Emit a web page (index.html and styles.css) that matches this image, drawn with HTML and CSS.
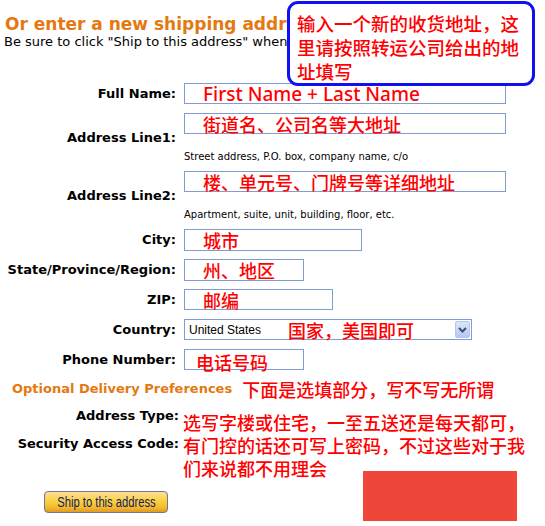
FILE: index.html
```html
<!doctype html>
<html lang="en">

<head>
  <meta charset="UTF-8">
  <title>Shipping Address</title>
  <link rel="stylesheet" href="styles.css">
</head>

<body>
  <div class="page">
    <h1 class="page__title">Or enter a new shipping address</h1>
    <p class="page__text">Be sure to click "Ship to this address" when</p>

    <!-- annotation bubble over the heading -->
    <div class="callout">输入一个新的收货地址，这里请按照转运公司给出的地址填写</div>

    <div class="form">
      <label class="form__label">Full Name:</label>
      <div class="form__field">
        <div class="form__input form__input--wide"><span class="note note--latin">First Name + Last Name</span></div>
      </div>

      <label class="form__label">Address Line1:</label>
      <div class="form__field form__field--hint">
        <div class="form__input form__input--wide"><span class="note">街道名、公司名等大地址</span></div>
        <span class="form__hint">Street address, P.O. box, company name, c/o</span>
      </div>

      <label class="form__label">Address Line2:</label>
      <div class="form__field form__field--hint">
        <div class="form__input form__input--wide"><span class="note">楼、单元号、门牌号等详细地址</span></div>
        <span class="form__hint">Apartment, suite, unit, building, floor, etc.</span>
      </div>

      <label class="form__label">City:</label>
      <div class="form__field">
        <div class="form__input form__input--city form__input--tall"><span class="note">城市</span></div>
      </div>

      <label class="form__label">State/Province/Region:</label>
      <div class="form__field">
        <div class="form__input form__input--short form__input--tall"><span class="note">州、地区</span></div>
      </div>

      <label class="form__label">ZIP:</label>
      <div class="form__field">
        <div class="form__input form__input--zip"><span class="note">邮编</span></div>
      </div>

      <label class="form__label">Country:</label>
      <div class="form__field">
        <div class="select">
          <span class="select__value">United States</span>
          <span class="note note--select">国家，美国即可</span>
          <span class="select__arrow">
            <svg width="9" height="6" viewBox="0 0 9 6" fill="none" xmlns="http://www.w3.org/2000/svg">
              <path d="M1 1L4.5 4.5L8 1" stroke="#3c4f7a" stroke-width="2" />
            </svg>
          </span>
        </div>
      </div>

      <label class="form__label">Phone Number:</label>
      <div class="form__field">
        <div class="form__input form__input--short"><span class="note note--phone">电话号码</span></div>
      </div>
    </div>

    <div class="prefs">
      <h2 class="prefs__title">Optional Delivery Preferences</h2>
      <span class="note">下面是选填部分，写不写无所谓</span>
    </div>

    <div class="prefs-grid">
      <div class="prefs-grid__labels">
        <span class="prefs-grid__label">Address Type:</span>
        <span class="prefs-grid__label">Security Access Code:</span>
      </div>
      <p class="note note--block">选写字楼或住宅，一至五送还是每天都可，有门控的话还可写上密码，不过这些对于我们来说都不用理会</p>
    </div>

    <button class="ship-button" type="button"><span>Ship to this address</span></button>

    <div class="redact"></div>
  </div>
</body>

</html>
```

FILE: styles.css
```css
:root {
  --ui-font: 'DejaVu Sans', Verdana, sans-serif;
  --note-font: 'Noto Sans CJK SC', 'Noto Sans', sans-serif;
  --orange: #e47911;
  --note-red: #ff0000;
  --field-border: #7f9dd0;
}

*,
*::before,
*::after {
  box-sizing: border-box;
}

body,
h1,
h2,
p {
  margin: 0;
}

body {
  background-color: #fff;
  color: #000;
  font-family: var(--ui-font);
}

.page {
  position: relative;
  width: 545px;
  height: 526px;
  overflow: hidden;
  padding-top: 14px;
}

.page__title {
  padding-left: 5px;
  color: var(--orange);
  font-size: 17px;
  line-height: 20px;
  font-weight: bold;
  white-space: nowrap;
}

.page__text {
  padding-left: 4px;
  font-size: 13px;
  line-height: 16px;
  white-space: nowrap;
}

/* blue annotation bubble */
.callout {
  position: absolute;
  top: 1px;
  left: 287px;
  width: 248px;
  height: 85px;
  padding: 7px 8px 0 7px;
  border: 3px solid #1010f0;
  border-radius: 11px;
  background-color: #fff;
  color: var(--note-red);
  font-family: var(--note-font);
  font-size: 18.5px;
  font-weight: 500;
  line-height: 24px;
}

.note {
  color: var(--note-red);
  font-family: var(--note-font);
  font-size: 18px;
  font-weight: 500;
  line-height: 20px;
  white-space: nowrap;
}

.note--latin {
  font-family: 'Noto Sans', sans-serif;
  font-size: 19px;
}

.form {
  display: grid;
  grid-template-columns: 176px 1fr;
  column-gap: 8px;
  row-gap: 8px;
  margin-top: 33px;
}

.form__label {
  align-self: center;
  text-align: right;
  font-size: 13px;
  font-weight: bold;
  line-height: 16px;
  white-space: nowrap;
}

.form__field {
  display: flex;
  flex-direction: column;
  min-height: 22px;
}

.form__field--hint {
  height: 50px;
}

.form__input {
  display: flex;
  align-items: center;
  height: 21px;
  padding-left: 18px;
  border: 1px solid var(--field-border);
  background-color: #fff;
}

.form__input--tall {
  height: 22px;
}

.form__input--wide {
  width: 322px;
}

.form__input--city {
  width: 178px;
}

.form__input--short {
  width: 120px;
}

.form__input--zip {
  width: 149px;
}

.form__hint {
  margin-top: 17px;
  font-size: 10px;
  line-height: 12px;
  white-space: nowrap;
}

.note--phone {
  margin-left: -7px;
  margin-top: 4px;
}

/* fake dropdown */
.select {
  display: flex;
  align-items: center;
  width: 288px;
  height: 21px;
  padding-left: 4px;
  border: 1px solid var(--field-border);
  background-color: #fff;
}

.select__value {
  width: 99px;
  font-family: 'Liberation Sans', Arial, sans-serif;
  font-size: 12px;
}

.note--select {
  flex: 1;
}

.select__arrow {
  display: flex;
  align-items: center;
  justify-content: center;
  width: 15px;
  height: 17px;
  margin-right: 1px;
  border: 1px solid #b6c7ef;
  border-radius: 2px;
  background: linear-gradient(#dde6fb, #b7c6f2);
}

.prefs {
  display: flex;
  align-items: center;
  gap: 10px;
  margin-top: 7px;
  padding-left: 12px;
  height: 22px;
}

.prefs__title {
  color: var(--orange);
  font-size: 13px;
  font-weight: bold;
  line-height: 16px;
  white-space: nowrap;
}

.prefs-grid {
  display: grid;
  grid-template-columns: 179px 345px;
  column-gap: 4px;
  margin-top: 2px;
}

.prefs-grid__labels {
  display: flex;
  flex-direction: column;
  align-items: flex-end;
}

.prefs-grid__label {
  font-size: 13px;
  font-weight: bold;
  line-height: 28px;
  white-space: nowrap;
}

.note--block {
  margin-top: 9px;
  line-height: 23px;
  white-space: normal;
}

.ship-button {
  display: flex;
  align-items: center;
  justify-content: center;
  width: 124px;
  height: 22px;
  margin: 11px 0 0 44px;
  padding: 0;
  border: 1px solid #6f7896;
  border-radius: 4px;
  background: linear-gradient(#fcdf9a 0%, #fbd345 40%, #f3bd2c 75%, #e39a22 100%);
  color: #14186a;
  font-family: 'Liberation Sans', Arial, sans-serif;
  font-size: 14px;
  line-height: 20px;
  white-space: nowrap;
  cursor: pointer;
}

.ship-button span {
  display: inline-block;
  transform: scaleX(0.8);
}

/* red block that hides part of the screenshot */
.redact {
  position: absolute;
  top: 471px;
  left: 363px;
  width: 154px;
  height: 50px;
  background-color: #f0463a;
}
```
